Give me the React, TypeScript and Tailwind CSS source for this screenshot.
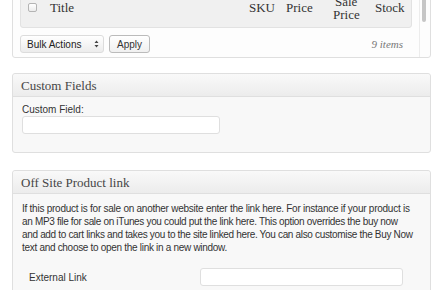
const serif = "font-['Liberation_Serif',Georgia,serif]";
const sans = "font-['Liberation_Sans',Arial,sans-serif]";

const Box = ({ title, children, className }: { title: string; children: React.ReactNode; className?: string }) => (
  <div className={`border border-[#dfdfdf] rounded-[3px] bg-[#f8f8f8] ${className ?? ""}`}>
    <div className="h-[23px] flex items-center pl-[8px] border-b border-[#dfdfdf] bg-gradient-to-b from-[#f9f9f9] to-[#ececec] rounded-t-[3px]">
      <h3 className={`${serif} text-[13px] text-[#464646] leading-none`}>{title}</h3>
    </div>
    {children}
  </div>
);

export default function App() {
  return (
    <div className={`h-[290px] overflow-hidden bg-white pl-[12px] pr-[9px] ${sans}`}>
      {/* Products list (scrolled) */}
      <div className="mt-[-22px] flex border border-[#dfdfdf] rounded-[3px] bg-[#fdfdfd]">
        <div className="flex-1 pl-[7px] pt-[8px] pb-[4px]">
          <div className={`h-[41px] flex items-center bg-[#f0f0f0] border border-[#e2e2e2] rounded-[3px] text-[13px] text-[#333] ${serif}`}>
            <span className="ml-[7px] w-[9px] h-[9px] rounded-[2px] border border-[#b4b4b4] bg-gradient-to-b from-white to-[#ececec]" />
            <span className="ml-[13px] flex-1">Title</span>
            <span className="w-[37px]">SKU</span>
            <span className="w-[47px]">Price</span>
            <span className="w-[42px] leading-[13px]">
              <span className="block pl-[2px]">Sale</span>
              <span className="block">Price</span>
            </span>
            <span className="w-[36px]">Stock</span>
          </div>
          <div className="mt-[7px] h-[18px] flex items-center">
            <div className="w-[84px] h-[18px] flex items-center justify-between border border-[#dcdcdc] rounded-[3px] bg-gradient-to-b from-white to-[#ececec] text-[10px] text-[#222] pl-[6px] pr-[4px]">
              <span>Bulk Actions</span>
              <svg width="5" height="8" viewBox="0 0 5 8">
                <path d="M2.5 0.5 L4.5 3 H0.5 Z M2.5 7.5 L4.5 5 H0.5 Z" fill="#444" />
              </svg>
            </div>
            <button className="ml-[5px] w-[41px] h-[18px] border border-[#bbb] rounded-[3px] bg-gradient-to-b from-white to-[#f0f0f0] text-[10px] text-[#333]">
              Apply
            </button>
            <span className={`ml-auto mr-[9px] italic text-[11px] text-[#777] ${serif}`}>9 items</span>
          </div>
        </div>
        <div className="ml-[7px] w-[11px] border-l border-[#ececec]">
          <div className="ml-[2px] w-[4px] h-[43px] rounded-full bg-[#c6c6c6]" />
        </div>
      </div>

      {/* Custom fields */}
      <Box title="Custom Fields" className="mt-[15px]">
        <div className="pl-[9px] pt-[6px] pb-[18px]">
          <label className="block text-[10px] leading-[13px] text-[#333]">Custom Field:</label>
          <input className="block w-[198px] h-[18px] bg-white border border-[#dfdfdf] rounded-[3px] outline-none" />
        </div>
      </Box>

      {/* Off site link */}
      <Box title="Off Site Product link" className="mt-[17px]">
        <div className="pl-[9px] pt-[8px] pb-[10px]">
          <p className="text-[10px] leading-[13px] text-[#333] whitespace-nowrap">
            <span className="block tracking-[-0.25px]">
              If this product is for sale on another website enter the link here. For instance if your product is
            </span>
            <span className="block tracking-[-0.33px]">
              an MP3 file for sale on iTunes you could put the link here. This option overrides the buy now
            </span>
            <span className="block tracking-[-0.33px]">
              and add to cart links and takes you to the site linked here. You can also customise the Buy Now
            </span>
            <span className="block tracking-[-0.3px]">text and choose to open the link in a new window.</span>
          </p>
          <div className="mt-[14px] flex items-center">
            <label className="ml-[7px] w-[171px] text-[10px] text-[#333]">External Link</label>
            <input className="w-[203px] h-[18px] bg-white border border-[#dfdfdf] rounded-[3px] outline-none" />
          </div>
        </div>
      </Box>
    </div>
  );
}
